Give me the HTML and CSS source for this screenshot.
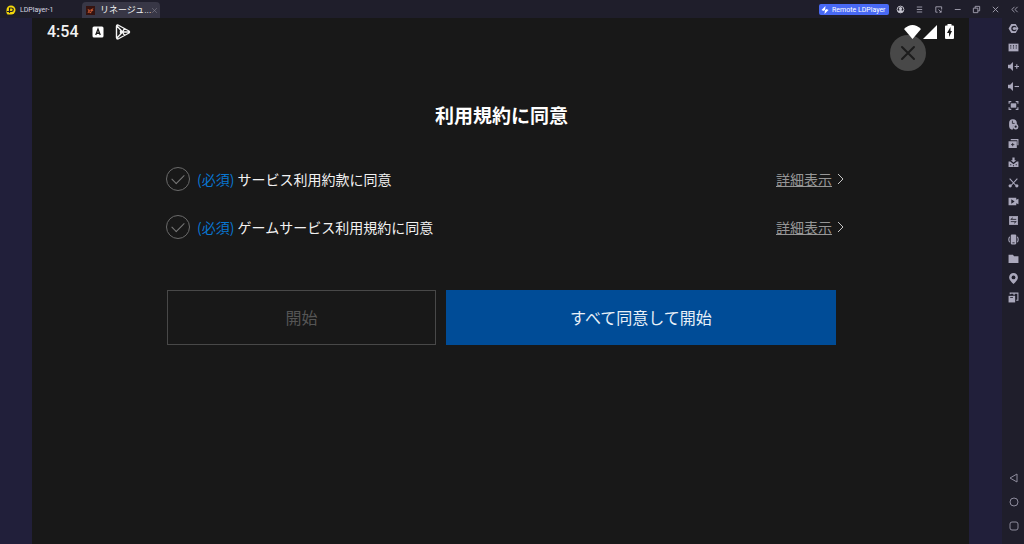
FILE: index.html
```html
<!doctype html>
<html lang="ja">
<head>
	<meta charset="utf-8">
	<meta name="viewport" content="width=device-width, initial-scale=1.0">
	<title>LDPlayer-1</title>
	<link rel="stylesheet" href="styles.css">
</head>
<body>
	<header class="titlebar">
		<svg class="logo" viewBox="0 0 20 20"><path fill="#f5d90a" d="M10 1a9 9 0 0 1 0 18H3l-2-3v-6a9 9 0 0 1 9-9z"/><path fill="none" stroke="#1f1e2c" stroke-width="2.4" d="M7 16V6h4a3.5 3.5 0 0 1 0 7H2"/></svg>
		<span class="app-name">LDPlayer-1</span>
		<div class="tab">
			<svg class="tab-icon" viewBox="0 0 18 18"><path fill="#351310" d="M0 0h18v18H0z"/><path fill="#c65a32" d="M3 6l5 2 7-4-2 4 2 1-4 2-1 4-3-2-4 1 2-4z"/><path fill="#5d1f18" d="M7 9h3v3H7z"/></svg>
			<span class="tab-title">リネージュ...</span>
			<button class="tab-close" aria-label="Close tab"><svg viewBox="0 0 12 12"><path d="M2 2l8 8M10 2l-8 8"/></svg></button>
		</div>
		<button class="remote">
			<svg viewBox="0 0 16 16"><path fill="#fff" d="M9 0L1 8l4 2 2-2 1 1zM7 16l8-8-4-2-2 2-1-1z"/></svg>
			<span>Remote LDPlayer</span>
		</button>
		<div class="window-buttons">
			<button aria-label="Account"><svg viewBox="0 0 20 20"><circle cx="10" cy="10" r="7.5" fill="none" stroke="#c9c8d4" stroke-width="2"/><circle cx="10" cy="8" r="3.500" fill="#c9c8d4"/><path fill="#c9c8d4" d="M4 14.500a6 3.500 0 0 1 12 0 8 8 0 0 1-12 0z"/></svg></button>
			<button aria-label="Menu"><svg class="line" viewBox="0 0 20 20"><path d="M4 4.500h12M4 10h12M4 15.500h12"/></svg></button>
			<button aria-label="Mini mode"><svg class="line" viewBox="0 0 20 20"><path d="M8 16H4V4h13v6M10 10l6 6M16 12v4h-4"/></svg></button>
			<button aria-label="Minimize"><svg class="line" viewBox="0 0 20 20"><path d="M4 10h13"/></svg></button>
			<button aria-label="Restore"><svg class="line" viewBox="0 0 20 20"><path d="M3 7h10v10H3zM7 7V3h10v10h-4"/></svg></button>
			<button aria-label="Close"><svg class="line" viewBox="0 0 20 20"><path d="M4 4l12 12M16 4L4 16"/></svg></button>
			<button aria-label="Collapse"><svg class="line" viewBox="0 0 20 20"><path d="M10 4l-6 6 6 6M17 4l-6 6 6 6"/></svg></button>
		</div>
	</header>

	<div class="workspace">
		<main class="screen">
			<div class="status">
				<span class="clock">4:54</span>
				<svg class="status-icon" viewBox="0 0 24 24"><rect x="1" y="1" width="22" height="22" rx="3" fill="#fff"/><path fill="none" stroke="#181818" stroke-width="2.600" d="M7.500 18L12 6l4.500 12M9 14.500h6"/></svg>
				<svg class="play-icon" viewBox="0 0 32 32"><path fill="none" stroke="#f4f4f4" stroke-width="2.800" stroke-linejoin="round" d="M5 2q-2 0-2 3v22q0 3 3 3l22-12q2-2 0-4L6 2zM4 4l11 12L4 28M15 16l-4-2v4zM15 16l4-7M15 16l4 7M15 16h13"/></svg>
				<div class="status-right">
					<svg class="wifi" viewBox="0 0 17 14"><path fill="#fff" d="M0 4Q8.500-4 17 4L8.500 14z"/></svg>
					<svg class="signal" viewBox="0 0 14 14"><path fill="#fff" d="M14 0v14H0z"/></svg>
					<svg class="battery" viewBox="0 0 9 15"><path fill="#fff" d="M2.500 1.500V0h4v1.500H8q1 0 1 1V14q0 1-1 1H1q-1 0-1-1V2.500q0-1 1-1z"/><path fill="#181818" d="M5.500 3L2 9h2v4l3-6H5.500z"/></svg>
				</div>
			</div>
			<button class="dismiss" aria-label="閉じる"><svg viewBox="0 0 36 36"><path d="M12 12l12 12M24 12L12 24"/></svg></button>

			<form class="terms">
				<h1>利用規約に同意</h1>
				<div class="term">
					<input type="checkbox" id="service">
					<label for="service"><span class="required">(必須)</span> サービス利用約款に同意</label>
					<a href="#service"><span>詳細表示</span><svg viewBox="0 0 8 12"><path d="M1 1l5 5-5 5"/></svg></a>
				</div>
				<div class="term">
					<input type="checkbox" id="game">
					<label for="game"><span class="required">(必須)</span> ゲームサービス利用規約に同意</label>
					<a href="#game"><span>詳細表示</span><svg viewBox="0 0 8 12"><path d="M1 1l5 5-5 5"/></svg></a>
				</div>
				<div class="actions">
					<button type="button" class="start" disabled>開始</button>
					<button type="button" class="agree">すべて同意して開始</button>
				</div>
			</form>
		</main>

		<nav class="sidebar">
			<div class="tools">
				<button aria-label="Settings"><svg viewBox="0 0 20 20"><path d="M6 2h8l5 8-5 8H6l-5-8z"/><circle class="hole" cx="11" cy="10" r="5"/><circle cx="11" cy="10" r="2.500"/><path d="M11 8h6v4h-6z"/></svg></button>
				<button aria-label="Keyboard"><svg viewBox="0 0 20 20"><path d="M1 3h18v14H1z"/><path class="hole" d="M4 6h2v2H4zM9 6h2v2H9zM14 6h2v2h-2zM4 10h2v2H4zM9 10h2v2H9zM14 10h2v2h-2z"/></svg></button>
				<button aria-label="Volume up"><svg viewBox="0 0 20 20"><path d="M0 7h4l5-5v16l-5-5H0z"/><path class="stroke" d="M12 10h8M16 6v8"/></svg></button>
				<button aria-label="Volume down"><svg viewBox="0 0 20 20"><path d="M0 7h4l5-5v16l-5-5H0z"/><path class="stroke" d="M12 10h8"/></svg></button>
				<button aria-label="Full screen"><svg viewBox="0 0 20 20"><path d="M5 6h10v8H5z"/><path class="stroke" d="M2 7V3h4M14 3h4v4M18 13v4h-4M6 17H2v-4"/></svg></button>
				<button aria-label="Sync"><svg viewBox="0 0 20 20"><path d="M2 8a7 7 0 0 1 14-1v5H9v7H6q-4-2-4-6z"/><path class="cut" d="M8 3v5h4"/><circle cx="14" cy="14" r="5"/><circle class="hole" cx="14" cy="14" r="2"/></svg></button>
				<button aria-label="Multi instance"><svg viewBox="0 0 20 20"><path d="M5 2h14v11h-2V4H5zM1 6h15v12H1z"/><path class="cut" d="M8.500 9v6M5.500 12h6"/></svg></button>
				<button aria-label="Install APK"><svg viewBox="0 0 20 20"><path d="M8 1h4v5h3l-5 4-5-4h3zM1 8h3l6 5 6-5h3v10H1z"/><path class="hole" d="M4 13h2v2H4zM9 15h2v2H9zM14 13h2v2h-2z"/></svg></button>
				<button aria-label="Screenshot"><svg viewBox="0 0 20 20"><path class="stroke" d="M3 3l11 12M17 3L6 15"/><circle cx="4" cy="16" r="3"/><circle cx="16" cy="16" r="3"/></svg></button>
				<button aria-label="Record"><svg viewBox="0 0 20 20"><path d="M1 3h14v4l4-2v10l-4-2v4H1z"/><path class="hole" d="M6 6l6 4-6 4z"/></svg></button>
				<button aria-label="Operation recorder"><svg viewBox="0 0 20 20"><path d="M2 2h16v16H2z"/><path class="cut" d="M15 8H5l4-3M5 12h10l-4 3"/></svg></button>
				<button aria-label="Rotate"><svg viewBox="0 0 20 20"><rect x="5" y="1" width="10" height="18" rx="2"/><path class="stroke" d="M3 5q-3 5 0 10M17 5q3 5 0 10"/><path class="cut" d="M8 16h4"/></svg></button>
				<button aria-label="Shared folder"><svg viewBox="0 0 20 20"><path d="M1 3h8l2 3h8v12H1z"/></svg></button>
				<button aria-label="Location"><svg viewBox="0 0 20 20"><path d="M10 0a8 8 0 0 1 8 8c0 4-4 8-8 12C6 16 2 12 2 8a8 8 0 0 1 8-8z"/><circle class="hole" cx="10" cy="8" r="3.500"/></svg></button>
				<button aria-label="More"><svg viewBox="0 0 20 20"><path d="M1 7h12v12H1z"/><path class="stroke" d="M4 4V2h14v13h-3M11 2v4"/><path class="cut" d="M4 10h5"/></svg></button>
			</div>
			<div class="nav-keys">
				<button aria-label="Back"><svg viewBox="0 0 10 10"><path d="M8 1v8L1 5z"/></svg></button>
				<button aria-label="Home"><svg viewBox="0 0 10 10"><circle cx="5" cy="5" r="4"/></svg></button>
				<button aria-label="Recent apps"><svg viewBox="0 0 10 10"><rect x="1" y="1" width="8" height="8" rx="2"/></svg></button>
			</div>
		</nav>
	</div>
</body>
</html>
```
FILE: styles.css
```css
:root {
	--chrome: #1f1e2b;
	--stage: #211f3a;
	--screen: #181818;
	--icon: #aaa8bc;
	--blue: #004c97;
}
* {
	box-sizing: border-box;
}
body {
	margin: 0;
	min-height: 100vh;
	display: flex;
	flex-direction: column;
	background: var(--chrome);
	font-family: Roboto, "Noto Sans CJK JP", sans-serif;
	color: #f2f2f2;
}
button {
	padding: 0;
	border: 0;
	background: none;
	color: inherit;
	font-family: inherit;
}
svg {
	display: block;
	flex: none;
}

/* window title bar */
.titlebar {
	height: 18px;
	display: flex;
	align-items: center;
	padding: 1px 5px 0 6px;
	font-size: 7px;
	line-height: 10px;
}
.logo {
	width: 10px;
	height: 10px;
	margin-right: 4px;
}
.app-name {
	width: 62px;
	color: #d8d7e0;
}
.tab {
	width: 78px;
	height: 16px;
	align-self: flex-end;
	display: flex;
	align-items: center;
	padding: 0 4px;
	border-radius: 4px 4px 0 0;
	background: #383746;
}
.tab-icon {
	width: 9px;
	height: 9px;
	margin-right: 5px;
}
.tab-title {
	flex: 1;
	font-size: 9px;
	white-space: nowrap;
}
.tab-close svg {
	width: 7px;
	height: 7px;
	fill: none;
	stroke: #85838f;
}
.remote {
	width: 70px;
	height: 11px;
	margin-left: auto;
	display: flex;
	align-items: center;
	gap: 3px;
	padding: 0 2px;
	border-radius: 2px;
	background: #4869f5;
	color: #fff;
	font-size: 7px;
	line-height: 10px;
	white-space: nowrap;
}
.remote svg {
	width: 8px;
	height: 8px;
}
.window-buttons {
	display: flex;
	gap: 10px;
	margin-left: 7px;
}
.window-buttons svg {
	width: 9px;
	height: 9px;
}
.window-buttons .line {
	fill: none;
	stroke: #a5a3b2;
	stroke-width: 2;
}

/* emulator area */
.workspace {
	flex: 1;
	display: flex;
	background: var(--stage);
}
.screen {
	position: relative;
	flex: 1;
	margin: 0 33px 0 32px;
	background: var(--screen);
}
.status {
	position: relative;
	z-index: 1;
	height: 27px;
	display: flex;
	align-items: center;
	padding: 0 15px;
}
.clock {
	width: 45px;
	font-size: 16px;
	line-height: 19px;
	font-weight: 500;
}
.status-icon {
	width: 12px;
	height: 12px;
	margin-right: 11px;
}
.play-icon {
	width: 16px;
	height: 16px;
}
.status-right {
	margin-left: auto;
	display: flex;
	align-items: center;
	gap: 2px;
}
.wifi {
	width: 17px;
	height: 14px;
}
.signal {
	width: 14px;
	height: 14px;
	margin-right: 6px;
}
.battery {
	width: 9px;
	height: 15px;
}
.dismiss {
	position: absolute;
	top: 17px;
	right: 43px;
	width: 36px;
	height: 36px;
	border-radius: 50%;
	background: #484848;
}
.dismiss svg {
	fill: none;
	stroke: #1c1c1c;
	stroke-width: 2;
	stroke-linecap: round;
}

/* terms form */
.terms {
	padding: 55px 124px 0 134px;
	font-family: "Noto Sans CJK JP", sans-serif;
}
h1 {
	margin: 0 0 37px;
	padding-right: 8px;
	font-size: 19px;
	line-height: 30px;
	font-weight: 700;
	text-align: center;
	color: #fff;
}
.term {
	display: flex;
	align-items: center;
	height: 24px;
	margin-bottom: 24px;
	font-size: 14px;
	line-height: 24px;
}
.term input {
	appearance: none;
	width: 24px;
	height: 24px;
	margin: 0 7px 0 0;
	border: 1px solid #6a6a6a;
	border-radius: 50%;
	display: grid;
	place-items: center;
}
.term input::before {
	content: "";
	width: 11px;
	height: 6px;
	margin-bottom: 4px;
	border: solid #777;
	border-width: 0 0 1px 1px;
	transform: rotate(-45deg);
}
.required {
	color: #0876d1;
}
.term a {
	margin-left: auto;
	display: flex;
	align-items: center;
	gap: 5px;
	color: #969696;
}
.term a svg {
	width: 8px;
	height: 12px;
	fill: none;
	stroke: #c4c4c4;
}
.actions {
	display: grid;
	grid-template-columns: 269fr 390fr;
	gap: 10px;
	margin: 51px 9px 0 1px;
}
.actions button {
	height: 55px;
	padding-bottom: 2px;
	font-size: 16px;
	line-height: 24px;
}
.start {
	border: 1px solid #484848;
	color: #555;
}
.agree {
	background: var(--blue);
	color: #e8f0f8;
}

/* right toolbar */
.sidebar {
	width: 22px;
	display: flex;
	flex-direction: column;
	justify-content: space-between;
	align-items: center;
	padding: 5px 0 13px 1px;
	background: var(--chrome);
}
.tools {
	height: 280px;
	display: flex;
	flex-direction: column;
	justify-content: space-between;
}
.tools svg {
	width: 11px;
	height: 11px;
	fill: var(--icon);
}
.tools .hole {
	fill: var(--chrome);
}
.tools .cut {
	fill: none;
	stroke: var(--chrome);
	stroke-width: 1.5;
}
.tools .stroke {
	fill: none;
	stroke: var(--icon);
	stroke-width: 2;
}
.nav-keys {
	display: grid;
	gap: 14px;
}
.nav-keys svg {
	width: 10px;
	height: 10px;
	fill: none;
	stroke: #8d8b9c;
}
```
